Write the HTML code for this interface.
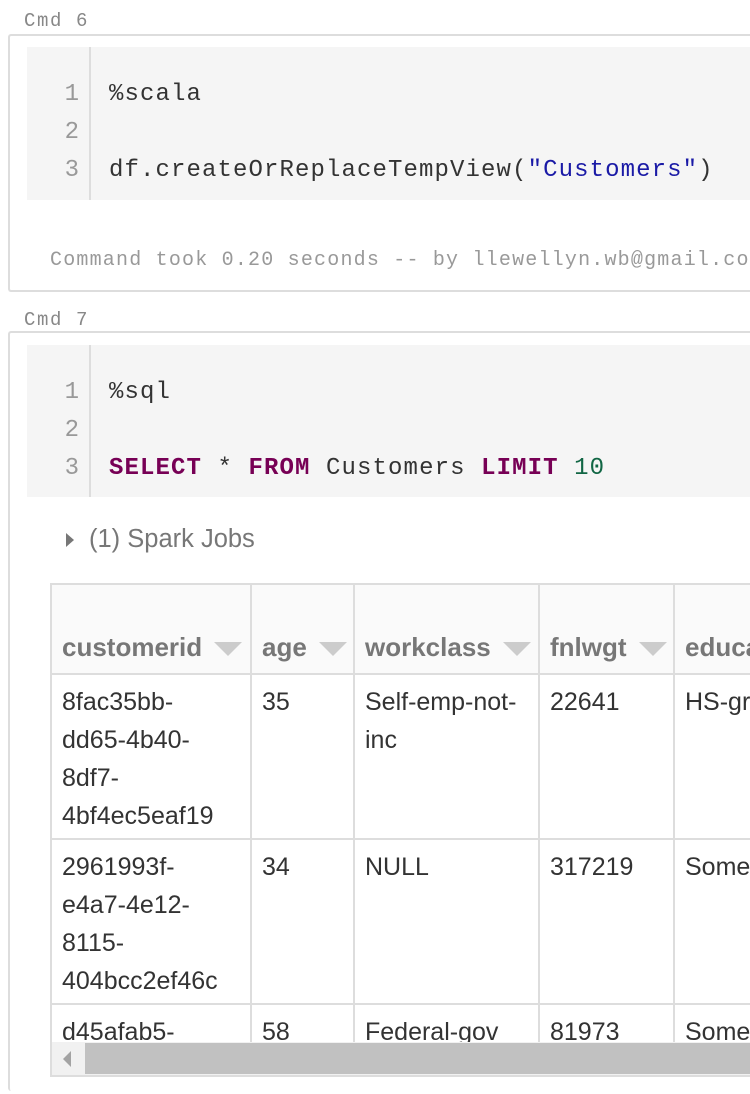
<!DOCTYPE html>
<html style="overflow:hidden;height:1094px"><head><style>
body{margin:0;width:750px;height:1094px;overflow:hidden;background:#fff;position:relative;font-family:"Liberation Sans",Arial,sans-serif}
.lbl{position:absolute;left:24px;font:19px "Liberation Mono",monospace;color:#888;letter-spacing:1.6px}
.box{position:absolute;left:8px;width:740px;border:2px solid #ddd;border-right:none;border-radius:3px 0 0 3px;background:#fff}
.code{position:absolute;left:27px;width:723px;background:#f5f5f5;font:24px "Liberation Mono",monospace;color:#333}
.gut{position:absolute;left:62px;top:0;bottom:0;width:1px;border-left:2px solid #ddd}
.ln{position:absolute;left:0;width:52px;text-align:right;color:#999}
.tx{position:absolute;left:82px;white-space:pre;letter-spacing:1.1px}
.kw{color:#770055;font-weight:bold}
table{position:absolute;border-collapse:collapse;table-layout:fixed;font-size:25px;color:#333}
td,th{border:2px solid #ddd;vertical-align:top;text-align:left;padding:8px 10px 0 10px;line-height:38px;white-space:nowrap;overflow:hidden}
th{height:76px;vertical-align:bottom;padding-bottom:4px;color:#777;background:#fafafa;line-height:44px;font-size:26px}
.ar{display:inline-block;width:0;height:0;border-left:14px solid transparent;border-right:14px solid transparent;border-top:14px solid #ccc;margin-left:12px;vertical-align:middle}
td{height:155px}
</style></head><body>
<div class="lbl" style="top:10px">Cmd 6</div>
<div class="box" style="top:34px;height:254px"></div>
<div class="code" style="top:47px;height:153px">
<div class="gut"></div>
<div class="ln" style="top:34px">1</div><div class="ln" style="top:72px">2</div><div class="ln" style="top:110px">3</div>
<div class="tx" style="top:34px">%scala</div>
<div class="tx" style="top:110px">df.createOrReplaceTempView(<span style="color:#1a1aa6">"Customers"</span>)</div>
</div>
<div style="position:absolute;left:50px;top:249px;width:700px;overflow:hidden;font:20px 'Liberation Mono',monospace;color:#999;white-space:pre;letter-spacing:1.2px">Command took 0.20 seconds -- by llewellyn.wb@gmail.com</div>
<div class="lbl" style="top:309px">Cmd 7</div>
<div class="box" style="top:331px;height:758px;border-bottom:none"></div>
<div class="code" style="top:345px;height:152px">
<div class="gut"></div>
<div class="ln" style="top:34px">1</div><div class="ln" style="top:72px">2</div><div class="ln" style="top:110px">3</div>
<div class="tx" style="top:34px">%sql</div>
<div class="tx" style="top:110px"><span class="kw">SELECT</span> * <span class="kw">FROM</span> Customers <span class="kw">LIMIT</span> <span style="color:#116644">10</span></div>
</div>
<div style="position:absolute;left:66px;top:533px;width:0;height:0;border-top:7px solid transparent;border-bottom:7px solid transparent;border-left:8px solid #777"></div>
<div style="position:absolute;left:89px;top:525px;font-size:25.5px;color:#777">(1) Spark Jobs</div>
<div style="position:absolute;left:50px;top:583px;width:700px;height:460px;overflow:hidden">
<table style="left:0;top:0;width:800px">
<colgroup><col style="width:200px"><col style="width:103px"><col style="width:185px"><col style="width:135px"><col style="width:177px"></colgroup>
<tr><th>customerid<span class="ar"></span></th><th>age<span class="ar"></span></th><th>workclass<span class="ar"></span></th><th>fnlwgt<span class="ar"></span></th><th>education</th></tr>
<tr><td>8fac35bb-<br>dd65-4b40-<br>8df7-<br>4bf4ec5eaf19</td><td>35</td><td>Self-emp-not-<br>inc</td><td>22641</td><td>HS-grad</td></tr>
<tr><td>2961993f-<br>e4a7-4e12-<br>8115-<br>404bcc2ef46c</td><td>34</td><td>NULL</td><td>317219</td><td>Some-college</td></tr>
<tr><td>d45afab5-</td><td>58</td><td>Federal-gov</td><td>81973</td><td>Some-college</td></tr>
</table></div>
<div style="position:absolute;left:50px;top:1042px;width:698px;height:33px;background:#f1f1f1;border-bottom:2px solid #ddd;border-left:2px solid #ddd"></div>
<div style="position:absolute;left:85px;top:1043px;width:665px;height:31px;background:#c1c1c1"></div>
<div style="position:absolute;left:63px;top:1051px;width:0;height:0;border-top:8px solid transparent;border-bottom:8px solid transparent;border-right:8px solid #a3a3a3"></div>
</body></html>
